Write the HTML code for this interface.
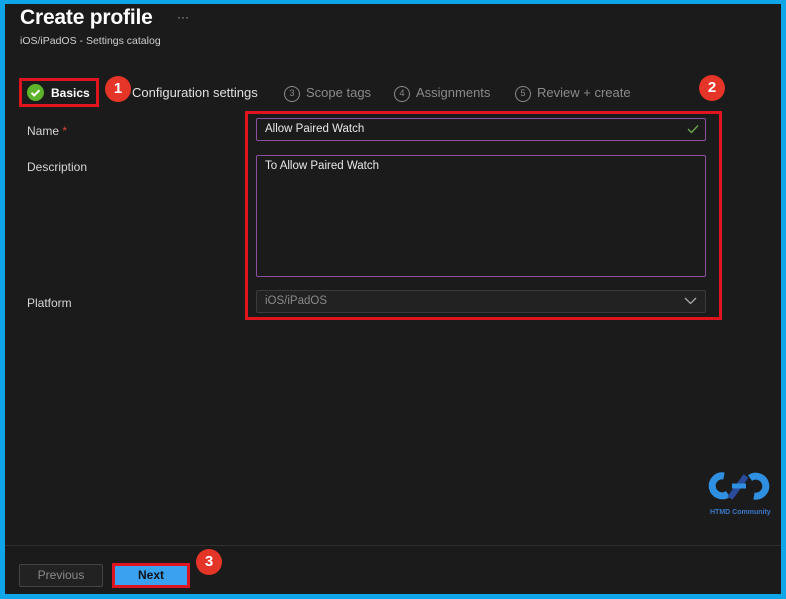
<!DOCTYPE html>
<html><head><meta charset="utf-8"><style>
*{margin:0;padding:0;box-sizing:border-box}
body{width:786px;height:599px;background:#0ea5e9;font-family:"Liberation Sans",sans-serif;position:relative;overflow:hidden}
.main{position:absolute;left:5px;top:4px;width:776px;height:590px;background:#1b1b1b}
.a{position:absolute}
.t{color:#fff}
.red{border:3px solid #e0141e;position:absolute}
.badge{position:absolute;width:26px;height:26px;border-radius:50%;background:#e53528;color:#fff;font-weight:bold;font-size:15px;text-align:center;line-height:26px}
.step{position:absolute;top:85px;font-size:13px;color:#8a8a8a}
.num{display:inline-block;width:16px;height:16px;border:1.5px solid #8a8a8a;border-radius:50%;font-size:9px;text-align:center;line-height:13px;vertical-align:1px;margin-right:6px}
.lbl{position:absolute;left:27px;font-size:12px;color:#d6d6d6}
.inp{position:absolute;left:256px;width:450px;border:1.5px solid #8a4fa0;border-radius:2px;font-size:11.5px;color:#e8e8e8;padding-left:8px}
</style></head><body>
<div class="main"></div>
<div class="a t" style="left:20px;top:6px;font-size:21px;font-weight:bold;letter-spacing:-0.2px">Create profile</div>
<div class="a" style="left:177px;top:10px;color:#aaa;font-size:12px">···</div>
<div class="a" style="left:20px;top:35px;font-size:10.5px;color:#cfcfcf">iOS/iPadOS - Settings catalog</div>

<div class="red" style="left:19px;top:78px;width:80px;height:29px"></div>
<div class="a" style="left:27px;top:84px;width:17px;height:17px;border-radius:50%;background:#5db32a"><svg width="17" height="17"><path d="M4.5 8.8l2.7 2.7 5.3-5.3" stroke="#fff" stroke-width="2" fill="none"/></svg></div>
<div class="a t" style="left:51px;top:86px;font-size:12px;font-weight:bold">Basics</div>
<div class="badge" style="left:105px;top:76px">1</div>
<div class="step" style="left:132px;color:#e0e0e0">Configuration settings</div>
<div class="step" style="left:284px"><span class="num">3</span>Scope tags</div>
<div class="step" style="left:394px"><span class="num">4</span>Assignments</div>
<div class="step" style="left:515px"><span class="num">5</span>Review + create</div>
<div class="badge" style="left:699px;top:75px">2</div>

<div class="red" style="left:245px;top:111px;width:477px;height:209px"></div>
<div class="lbl" style="top:124px">Name <span style="color:#e04040">*</span></div>
<div class="lbl" style="top:160px">Description</div>
<div class="lbl" style="top:296px">Platform</div>
<div class="inp" style="top:118px;height:23px;line-height:20px">Allow Paired Watch<svg class="a" style="right:6px;top:5px" width="12" height="10"><path d="M1 5l3.5 3.5L11 1.5" stroke="#6aa84f" stroke-width="1.4" fill="none"/></svg></div>
<div class="inp" style="top:155px;height:122px;padding-top:4px">To Allow Paired Watch</div>
<div class="inp" style="top:290px;height:23px;line-height:20px;border-color:#3a3a3a;background:#222;color:#8a8a8a">iOS/iPadOS<svg class="a" style="right:8px;top:6px" width="13" height="8"><path d="M1 1l5.5 5.5L12 1" stroke="#aaa" stroke-width="1.3" fill="none"/></svg></div>

<svg class="a" style="left:708px;top:466px" width="66" height="40"><path d="M16 10a10 10 0 1 0 4 18" stroke="#2f8fe0" stroke-width="7" fill="none"/><path d="M46 30a10 10 0 1 0-4-18" stroke="#2f8fe0" stroke-width="7" fill="none"/><path d="M22 32l16-22" stroke="#2a4a9a" stroke-width="6"/><path d="M24 20h14" stroke="#2f8fe0" stroke-width="5"/></svg>
<div class="a" style="left:710px;top:509px;font-size:7px;color:#3a78c8;font-weight:bold">HTMD Community</div>

<div class="a" style="left:5px;top:545px;width:776px;height:1px;background:#2e2e2e"></div>
<div class="a" style="left:19px;top:564px;width:84px;height:23px;border:1px solid #444;background:#222;border-radius:2px;color:#8a8a8a;font-size:12px;text-align:center;line-height:21px">Previous</div>
<div class="a" style="left:112px;top:563px;width:78px;height:25px;border:3px solid #e0141e;background:#3aa0f0;color:#111;font-size:12px;font-weight:bold;text-align:center;line-height:19px">Next</div>
<div class="badge" style="left:196px;top:549px">3</div>
</body></html>
